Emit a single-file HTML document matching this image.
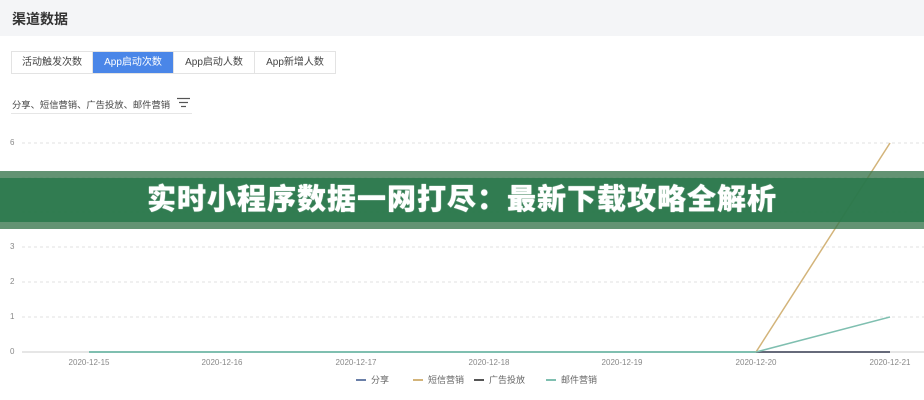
<!DOCTYPE html>
<html><head><meta charset="utf-8"><style>
body{margin:0;width:924px;height:400px;background:#fff;font-family:"Liberation Sans","Noto Sans CJK SC",sans-serif;position:relative;overflow:hidden}
.hd{position:absolute;left:0;top:0;width:924px;height:36px;background:#f4f5f7}
.hd span{position:absolute;left:12px;top:9px;font-size:14px;color:#333;font-weight:bold}
.tabs{position:absolute;left:11px;top:51px;display:flex;border:1px solid #e3e3e3;height:21px}
.tabs div{font-size:10px;color:#444;line-height:21px;text-align:center;border-right:1px solid #e3e3e3}
.tabs .a{background:#4a86e8;color:#fff}
.f{position:absolute;left:12px;top:97px;font-size:9.3px;color:#444;white-space:nowrap}
.fl{position:absolute;left:11px;top:113px;width:181px;height:1px;background:#e6e6e6}
.y{position:absolute;left:10px;font-size:8px;color:#888}
.x{position:absolute;top:358px;font-size:8px;color:#888;transform:translateX(-50%);white-space:nowrap}
.band{position:absolute;left:0;top:171px;width:924px;height:58px;background:rgba(60,120,80,.8)}
.band2{position:absolute;left:0;top:178px;width:924px;height:44px;background:rgba(40,120,75,.85)}
.t{position:absolute;left:0;top:180px;width:924px;text-align:center;font-size:29px;font-weight:900;color:#fff;letter-spacing:1px;line-height:40px;text-shadow:0 0 1px #fff}
.lg{position:absolute;top:373px;font-size:9px;color:#666}
</style></head><body>
<div class="hd"><span>渠道数据</span></div>
<div class="tabs"><div style="width:80px">活动触发次数</div><div class="a" style="width:80px">App启动次数</div><div style="width:80px">App启动人数</div><div style="width:80px;border:0">App新增人数</div></div>
<div class="f">分享、短信营销、广告投放、邮件营销</div>
<div class="fl"></div>
<svg style="position:absolute;left:0;top:0" width="924" height="400">
<g stroke="#555" stroke-width="1.2"><line x1="177" y1="98.5" x2="190" y2="98.5"/><line x1="179" y1="102.5" x2="188" y2="102.5"/><line x1="181" y1="106.5" x2="186" y2="106.5"/></g>
<g stroke="#e2e2e2" stroke-dasharray="3,3">
<line x1="22" y1="143" x2="924" y2="143"/><line x1="22" y1="178" x2="924" y2="178"/><line x1="22" y1="212" x2="924" y2="212"/><line x1="22" y1="247" x2="924" y2="247"/><line x1="22" y1="282" x2="924" y2="282"/><line x1="22" y1="317" x2="924" y2="317"/></g>
<line x1="22" y1="352" x2="924" y2="352" stroke="#ccc"/>
<line x1="89" y1="352" x2="756" y2="352" stroke="#7fbfb0" stroke-width="2"/>
<line x1="756" y1="352" x2="890" y2="352" stroke="#666a7a" stroke-width="2"/>
<line x1="756" y1="352" x2="890" y2="143" stroke="#d3b47a" stroke-width="1.5"/>
<line x1="756" y1="352" x2="890" y2="317" stroke="#7fbfb0" stroke-width="1.5"/>
<g stroke-width="2"><line x1="356" y1="380" x2="366" y2="380" stroke="#6a7fa8"/><line x1="413" y1="380" x2="423" y2="380" stroke="#d3b47a"/><line x1="474" y1="380" x2="484" y2="380" stroke="#555"/><line x1="546" y1="380" x2="556" y2="380" stroke="#7fbfb0"/></g>
</svg>
<div class="y" style="top:138px">6</div><div class="y" style="top:242px">3</div><div class="y" style="top:277px">2</div><div class="y" style="top:312px">1</div><div class="y" style="top:347px">0</div>
<div class="x" style="left:89px">2020-12-15</div><div class="x" style="left:222px">2020-12-16</div><div class="x" style="left:356px">2020-12-17</div><div class="x" style="left:489px">2020-12-18</div><div class="x" style="left:622px">2020-12-19</div><div class="x" style="left:756px">2020-12-20</div><div class="x" style="left:890px">2020-12-21</div>
<div class="lg" style="left:371px">分享</div><div class="lg" style="left:428px">短信营销</div><div class="lg" style="left:489px">广告投放</div><div class="lg" style="left:561px">邮件营销</div>
<div class="band"></div><div class="band2"></div>
<div class="t">实时小程序数据一网打尽：最新下载攻略全解析</div>
</body></html>
